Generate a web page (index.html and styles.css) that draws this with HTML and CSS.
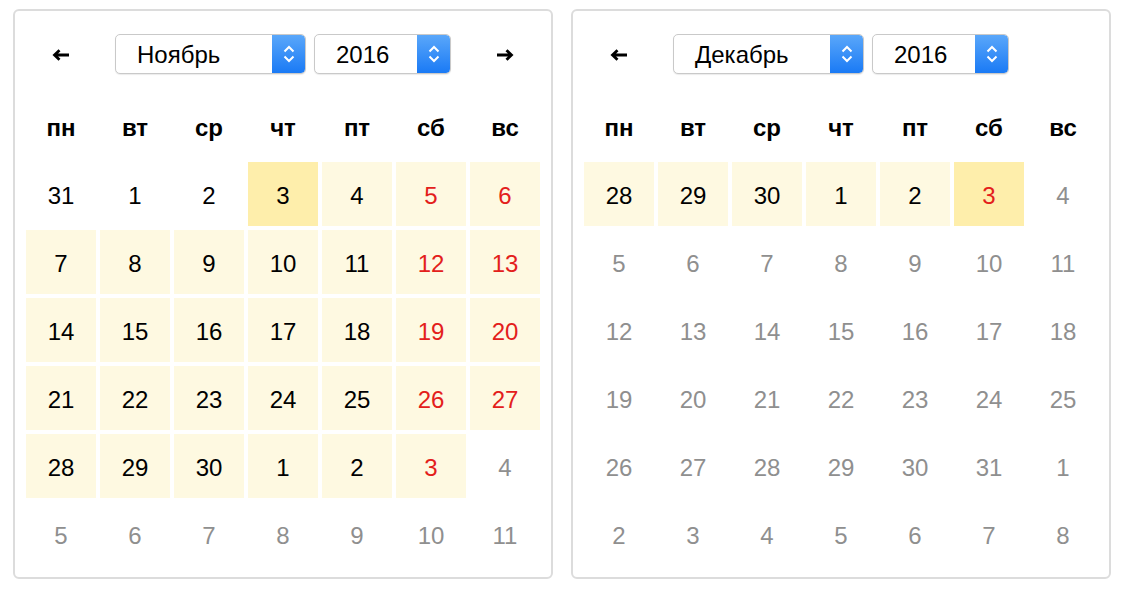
FILE: index.html
```html
<html>
  <head>
    <title>Календарь</title>
    <link rel="stylesheet" href="styles.css">
  </head>
  <body>
    <div class="calendars">

      <div class="cal">
        <div class="head">
          <span class="nav"><svg width="18" height="12" viewBox="0 0 18 12"><path d="M17 6H3M7.5 1.2L2.5 6L7.5 10.8" /></svg></span>
          <div class="pickers">
            <div class="select month"><span>Ноябрь</span><i class="spin"><svg width="14" height="24" viewBox="0 0 14 24"><path d="M2.5 9.5L7 5L11.5 9.5M2.5 14.5L7 19L11.5 14.5" /></svg></i></div>
            <div class="select year"><span>2016</span><i class="spin"><svg width="14" height="24" viewBox="0 0 14 24"><path d="M2.5 9.5L7 5L11.5 9.5M2.5 14.5L7 19L11.5 14.5" /></svg></i></div>
          </div>
          <span class="nav"><svg width="18" height="12" viewBox="0 0 18 12"><path d="M1 6H15M10.5 1.2L15.5 6L10.5 10.8" /></svg></span>
        </div>
        <div class="grid">
          <b class="wd">пн</b><b class="wd">вт</b><b class="wd">ср</b><b class="wd">чт</b><b class="wd">пт</b><b class="wd">сб</b><b class="wd">вс</b>

          <span class="day">31</span><span class="day">1</span><span class="day">2</span><span class="day today">3</span><span class="day range">4</span><span class="day range red">5</span><span class="day range red">6</span>
          <span class="day range">7</span><span class="day range">8</span><span class="day range">9</span><span class="day range">10</span><span class="day range">11</span><span class="day range red">12</span><span class="day range red">13</span>
          <span class="day range">14</span><span class="day range">15</span><span class="day range">16</span><span class="day range">17</span><span class="day range">18</span><span class="day range red">19</span><span class="day range red">20</span>
          <span class="day range">21</span><span class="day range">22</span><span class="day range">23</span><span class="day range">24</span><span class="day range">25</span><span class="day range red">26</span><span class="day range red">27</span>
          <span class="day range">28</span><span class="day range">29</span><span class="day range">30</span><span class="day range">1</span><span class="day range">2</span><span class="day range red">3</span><span class="day muted">4</span>
          <span class="day muted">5</span><span class="day muted">6</span><span class="day muted">7</span><span class="day muted">8</span><span class="day muted">9</span><span class="day muted">10</span><span class="day muted">11</span>
        </div>
      </div>

      <div class="cal">
        <div class="head">
          <span class="nav"><svg width="18" height="12" viewBox="0 0 18 12"><path d="M17 6H3M7.5 1.2L2.5 6L7.5 10.8" /></svg></span>
          <div class="pickers">
            <div class="select month"><span>Декабрь</span><i class="spin"><svg width="14" height="24" viewBox="0 0 14 24"><path d="M2.5 9.5L7 5L11.5 9.5M2.5 14.5L7 19L11.5 14.5" /></svg></i></div>
            <div class="select year"><span>2016</span><i class="spin"><svg width="14" height="24" viewBox="0 0 14 24"><path d="M2.5 9.5L7 5L11.5 9.5M2.5 14.5L7 19L11.5 14.5" /></svg></i></div>
          </div>
          <span class="nav"></span>
        </div>
        <div class="grid">
          <b class="wd">пн</b><b class="wd">вт</b><b class="wd">ср</b><b class="wd">чт</b><b class="wd">пт</b><b class="wd">сб</b><b class="wd">вс</b>

          <span class="day range">28</span><span class="day range">29</span><span class="day range">30</span><span class="day range">1</span><span class="day range">2</span><span class="day today red">3</span><span class="day muted">4</span>
          <span class="day muted">5</span><span class="day muted">6</span><span class="day muted">7</span><span class="day muted">8</span><span class="day muted">9</span><span class="day muted">10</span><span class="day muted">11</span>
          <span class="day muted">12</span><span class="day muted">13</span><span class="day muted">14</span><span class="day muted">15</span><span class="day muted">16</span><span class="day muted">17</span><span class="day muted">18</span>
          <span class="day muted">19</span><span class="day muted">20</span><span class="day muted">21</span><span class="day muted">22</span><span class="day muted">23</span><span class="day muted">24</span><span class="day muted">25</span>
          <span class="day muted">26</span><span class="day muted">27</span><span class="day muted">28</span><span class="day muted">29</span><span class="day muted">30</span><span class="day muted">31</span><span class="day muted">1</span>
          <span class="day muted">2</span><span class="day muted">3</span><span class="day muted">4</span><span class="day muted">5</span><span class="day muted">6</span><span class="day muted">7</span><span class="day muted">8</span>
        </div>
      </div>

    </div>
  </body>
</html>
```

FILE: styles.css
```css
body {
  margin: 0;
  font-family: "Liberation Sans", Helvetica, Arial, sans-serif;
  color: #000;
  background: #fff;
}
.calendars {
  display: flex;
  gap: 18px;
  padding: 9px 13px;
}
.cal {
  width: 514px;
  padding: 23px 11px 11px;
  border: 2px solid #dcdcdc;
  border-radius: 6px;
}
.head {
  display: grid;
  grid-template-columns: 70px 1fr 70px;
  height: 40px;
  align-items: center;
}
.nav {
  display: flex;
  justify-content: center;
  align-items: center;
  padding-top: 2px;
}
.nav svg {
  fill: none;
  stroke: #000;
  stroke-width: 2.8;
}
.pickers {
  display: flex;
  justify-content: center;
  gap: 8px;
}
.select {
  display: flex;
  height: 40px;
  box-sizing: border-box;
  border: 1px solid #c9c9c9;
  border-radius: 5px;
  box-shadow: 0 1px 1px rgba(0, 0, 0, 0.08);
  background: #fff;
  font-size: 24px;
  overflow: hidden;
}
.select span {
  flex: 1;
  padding: 2px 0 0 21px;
  line-height: 36px;
}
.month { width: 191px; }
.year { width: 137px; }
.spin {
  width: 33px;
  display: flex;
  justify-content: center;
  align-items: center;
  background: linear-gradient(#5aa7fa, #1a7af5);
  border-radius: 0 4px 4px 0;
}
.spin svg {
  fill: none;
  stroke: #fff;
  stroke-width: 2;
}
.grid {
  display: grid;
  grid-template-columns: repeat(7, 70px);
  grid-template-rows: 62px repeat(6, 64px);
  gap: 4px;
  margin-top: 22px;
}
.wd {
  display: flex;
  justify-content: center;
  align-items: center;
  padding-top: 2px;
  font-size: 24px;
  font-weight: bold;
}
.day {
  display: flex;
  justify-content: center;
  align-items: center;
  padding-top: 3px;
  font-size: 24px;
}
.range { background: #fef9e1; }
.today { background: #feeeab; }
.red { color: #e3201b; }
.muted { color: #8f8f8f; }
```
